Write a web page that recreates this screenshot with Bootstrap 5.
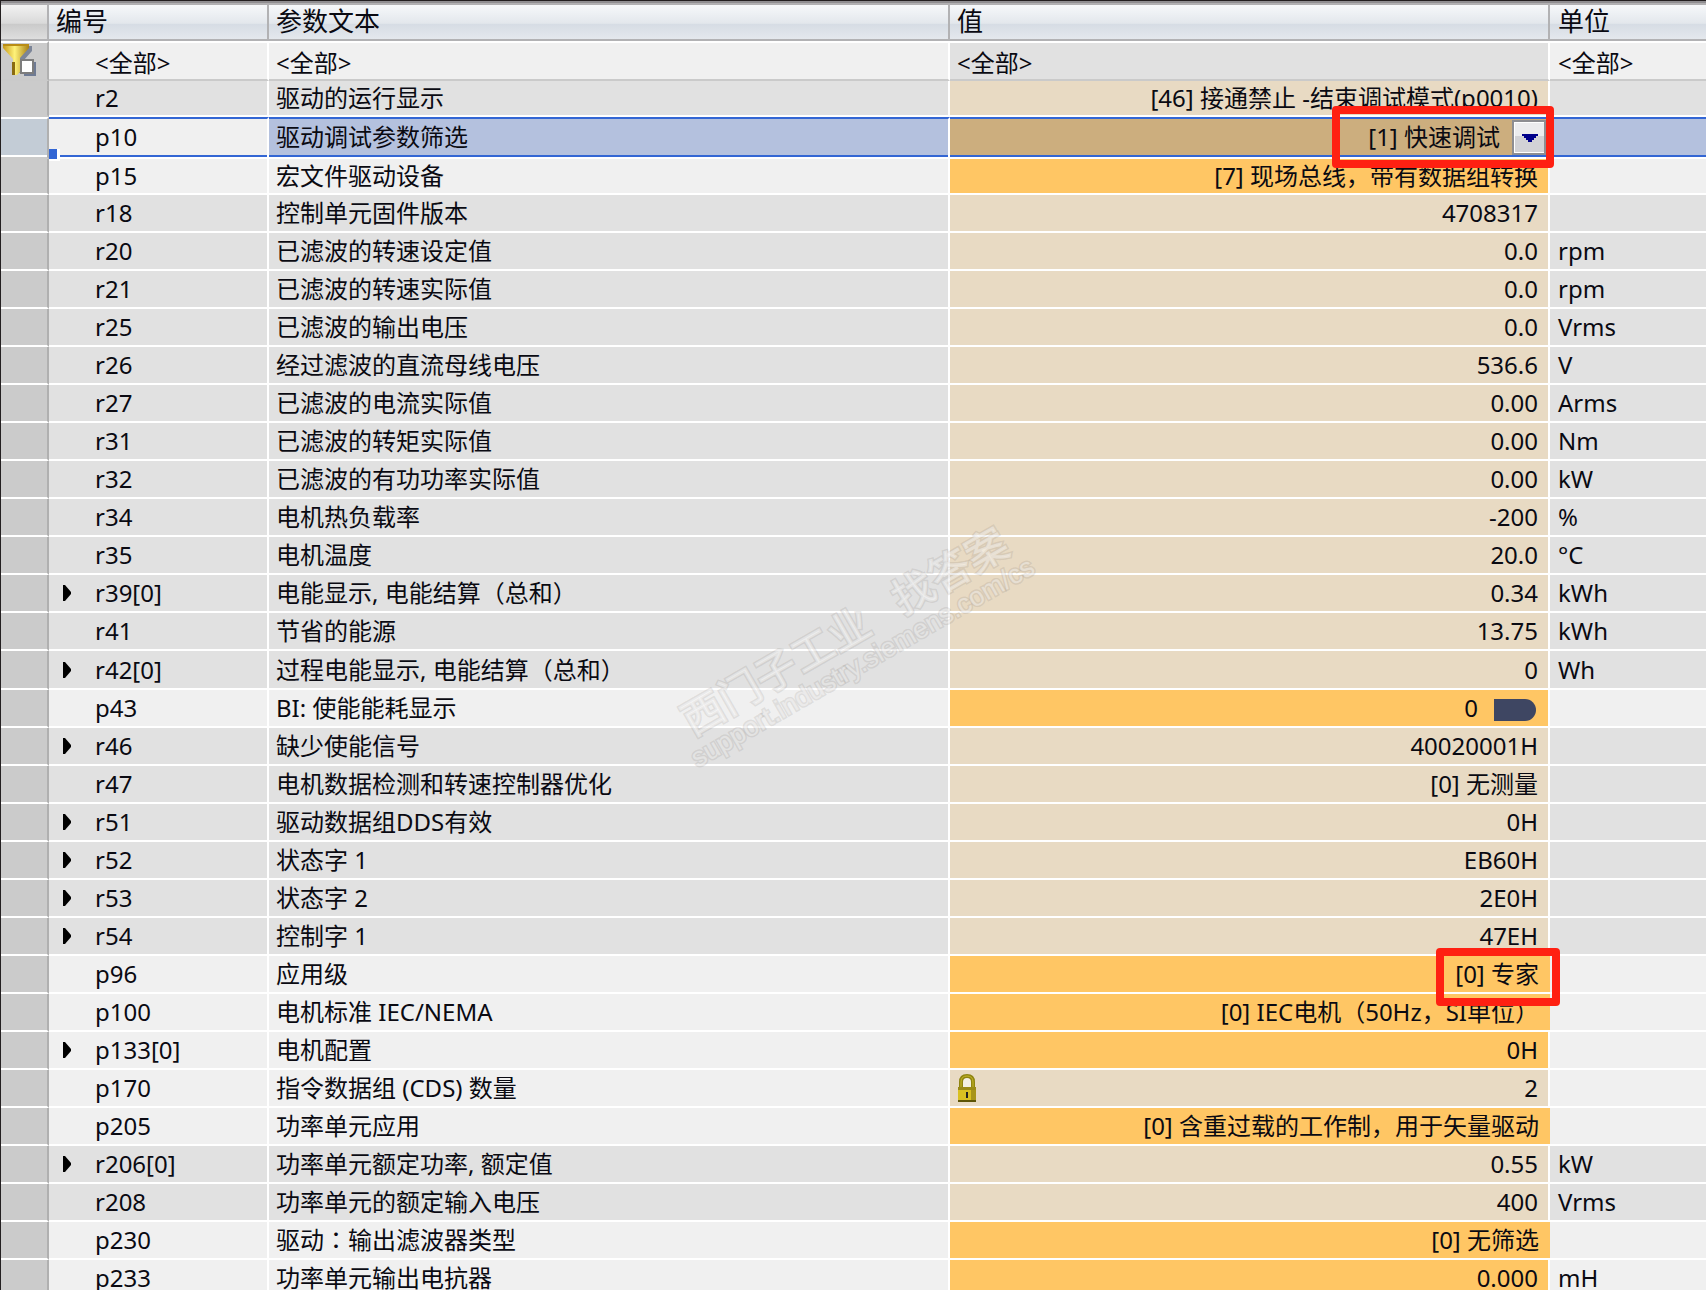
<!DOCTYPE html>
<html lang="zh-CN">
<head>
<meta charset="utf-8">
<meta name="viewport" content="width=device-width, initial-scale=1">
<title>参数列表</title>
<link href="https://cdn.jsdelivr.net/npm/bootstrap@5.3.0/dist/css/bootstrap.min.css" rel="stylesheet">
<style>
  body { font-family: "Noto Sans", "Noto Sans CJK SC", sans-serif; font-size: 24px; line-height: 34px; color: #0a0a12; background: #fff; overflow: hidden; }
  .frame { border-top: 1px solid #231f20; border-left: 1px solid #231f20; overflow: hidden; height: 100vh; }
  .topline { height: 4px; background: linear-gradient(#8f8d90 50%, #b1b0b2 50%); }
  .grid { width: 100%; table-layout: fixed; border-collapse: separate; border-spacing: 0; white-space: nowrap; }
  .grid th, .grid td { padding: 0 7px; height: 38px; border-right: 2px solid #fff; border-bottom: 2px solid #fff; vertical-align: middle; }
  .grid th:last-child, .grid td:last-child { border-right: 0; padding-left: 8px; }
  .grid .c-gut { width: 48px; } .grid .c-num { width: 220px; } .grid .c-txt { width: 681px; } .grid .c-val { width: 600px; }
  .grid thead th { height: 36px; padding-bottom: 2px; font-size: 26px; font-weight: 400; line-height: 32px; border-color: #b2b2b4; background: linear-gradient(#f6f8fa, #e3e7ec 54%, #d6dce4 56%, #e4e8ed); }
  .grid thead th:first-child { background: linear-gradient(#f2f2f2, #d9d9d9 54%, #cacaca 56%, #dedede); }
  .grid .gut { background: #cbcbcb; border-right-color: #b0b0b0; padding: 0; }
  .grid .num { padding-left: 13px; }
  .ro td { background: #e1e1e1; }
  .rw td { background: #f0f0f0; }
  .ro .val, .rw .val { text-align: right; padding-right: 10px; }
  .ro .val { background: #e8dac3; }
  .rw .val { background: #ffc664; }
  .rw.locked .val { background: #e8dac3; }
  .grid .wide { border-right: 0; padding-right: 11px; }
  .filters td { background: #f0f0f0; border-bottom-color: #cacaca; height: 40px; border-top: 2px solid #fff; }
  .filters .fval { background: #e1e1e1; }
  .filters input { background: none; border: 0; padding: 0; width: 100%; height: 36px; display: block; color: inherit; font: inherit; line-height: 34px; }
  .grid .filters .num { padding-left: 46px; }
  .tight td { height: 36px; }
  .first .gut { border-bottom-color: #cbcbcb; }
  .tall td { height: 39px; }
  .tree { width: 14px; height: 34px; margin-right: 19px; border: 0; padding: 0; background: none; display: inline-flex; align-items: center; flex: none; }
  .grid .sel td { background: #b4c1de; height: 42px; padding-bottom: 2px; border-top: 2px solid #3366d4; border-bottom: 2px solid #fff; box-shadow: inset 0 -2px #3366d4; }
  .grid .sel .num { background: #f0f0f0; position: relative; }
  .grid .sel .gut { background: #c3ccd6; border-top-color: #fff; border-bottom-color: #cbcbcb; box-shadow: inset 0 -2px #fff; }
  .grid .sel .val { background: #ccae7e; position: relative; padding-right: 0; }
  .handle { position: absolute; left: 0; bottom: -4px; width: 11px; height: 12px; background: #3366d4; border-right: 3px solid #fff; border-bottom: 2px solid #fff; }
  .sel select { appearance: none; background: none; border: 0; padding: 0 48px 0 0; width: 100%; height: 34px; font: inherit; color: inherit; line-height: 34px; text-align-last: right; display: block; }
  .drop { position: absolute; right: 0; top: 1px; pointer-events: none; }
  .callout { position: absolute; border: 8px solid #ff2012; border-radius: 4px; z-index: 3; pointer-events: none; }
  .call-a { width: 222px; height: 62px; right: -6px; top: -13px; }
  .call-b { width: 124px; height: 58px; right: -21px; top: -9px; }
  .link-pill { width: 42px; height: 22px; border: 0; padding: 0; margin-top: 3px; margin-right: 2px; border-radius: 0 11px 11px 0; background: #3e4662; }
  .tc { font-family: "Noto Sans CJK TC", sans-serif; line-height: 1; }
  .stamp { position: absolute; left: 851px; top: 643px; transform: translate(-50%, -50%) rotate(-30deg); white-space: nowrap; text-align: center; color: rgba(255,255,255,.42); -webkit-text-stroke: 3px rgba(125,120,115,.16); paint-order: stroke fill; pointer-events: none; }
  .stamp-a { font-size: 42px; line-height: 42px; font-weight: 500; }
  .stamp-b { font-family: "Liberation Sans", sans-serif; font-size: 27px; line-height: 30px; }
</style>
<script src="https://cdn.jsdelivr.net/npm/bootstrap@5.3.0/dist/js/bootstrap.bundle.min.js"></script>
</head>
<body>
<main class="frame position-relative">
<div class="topline"></div>
<table class="grid">
  <colgroup><col class="c-gut"><col class="c-num"><col class="c-txt"><col class="c-val"><col></colgroup>
  <thead><tr><th aria-label="状态"></th><th scope="col">编号</th><th scope="col">参数文本</th><th scope="col">值</th><th scope="col">单位</th></tr></thead>
  <tbody id="rows">
    <tr class="filters">
      <td class="gut"><svg class="d-block" width="36" height="36" viewBox="0 0 36 36" aria-hidden="true"><defs><linearGradient id="gold"><stop offset="0" stop-color="#c79a1c"/><stop offset=".45" stop-color="#fff27a"/><stop offset="1" stop-color="#a87f12"/></linearGradient></defs><path d="M6 3h25v5l-8 9v13h-7V18L6 7z" fill="#7c8598"/><path d="M2 1h26v4l-9 10v14l-3 3h-4V16L2 5z" fill="url(#gold)"/><path d="M2 1h26v2H2z" fill="#b98c14"/><path d="M11 19h3v13h-3z" fill="#8a6a10"/><path d="M23 19h12v14H23z" fill="#6f7b94"/><path d="M20 17h12v13H20z" fill="#fff" stroke="#7d7d7d" stroke-width="2"/></svg></td>
      <td class="num"><input type="text" value="&lt;全部&gt;" aria-label="筛选编号"></td>
      <td><input type="text" value="&lt;全部&gt;" aria-label="筛选参数文本"></td>
      <td class="fval"><input type="text" value="&lt;全部&gt;" aria-label="筛选值"></td>
      <td><input type="text" value="&lt;全部&gt;" aria-label="筛选单位"></td>
    </tr>
  </tbody>
</table>
<div class="stamp" aria-hidden="true"><div class="stamp-a">西门子工业&nbsp;&nbsp;&nbsp;找答案</div><div class="stamp-b">support.industry.siemens.com/cs</div></div>
</main>
<script>
  // number, text, value, unit, flags: t = has children, k = locked, w = wide value cell
  const params = [
    ["r2", "驱动的运行显示", "[46] 接通禁止 -结束调试模式(p0010)", "", ""],
    ["p10", "驱动调试参数筛选", "[1] 快速调试", "", ""],
    ["p15", "宏文件驱动设备", "[7] 现场总线，带有数据组转换", "", ""],
    ["r18", "控制单元固件版本", "4708317", "", ""],
    ["r20", "已滤波的转速设定值", "0.0", "rpm", ""],
    ["r21", "已滤波的转速实际值", "0.0", "rpm", ""],
    ["r25", "已滤波的输出电压", "0.0", "Vrms", ""],
    ["r26", "经过滤波的直流母线电压", "536.6", "V", ""],
    ["r27", "已滤波的电流实际值", "0.00", "Arms", ""],
    ["r31", "已滤波的转矩实际值", "0.00", "Nm", ""],
    ["r32", "已滤波的有功功率实际值", "0.00", "kW", ""],
    ["r34", "电机热负载率", "-200", "%", ""],
    ["r35", "电机温度", "20.0", "°C", ""],
    ["r39[0]", "电能显示, 电能结算（总和）", "0.34", "kWh", "t"],
    ["r41", "节省的能源", "13.75", "kWh", ""],
    ["r42[0]", "过程电能显示, 电能结算（总和）", "0", "Wh", "t"],
    ["p43", "BI: 使能能耗显示", "0", "", ""],
    ["r46", "缺少使能信号", "40020001H", "", "t"],
    ["r47", "电机数据检测和转速控制器优化", "[0] 无测量", "", ""],
    ["r51", "驱动数据组DDS有效", "0H", "", "t"],
    ["r52", "状态字 1", "EB60H", "", "t"],
    ["r53", "状态字 2", "2E0H", "", "t"],
    ["r54", "控制字 1", "47EH", "", "t"],
    ["p96", "应用级", "[0] 专家", "", "w"],
    ["p100", "电机标准 IEC/NEMA", "[0] IEC电机（50Hz，SI单位）", "", "w"],
    ["p133[0]", "电机配置", "0H", "", "t"],
    ["p170", "指令数据组 (CDS) 数量", "2", "", "k"],
    ["p205", "功率单元应用", "[0] 含重过载的工作制，用于矢量驱动", "", "w"],
    ["r206[0]", "功率单元额定功率, 额定值", "0.55", "kW", "t"],
    ["r208", "功率单元的额定输入电压", "400", "Vrms", ""],
    ["p230", "驱动<span class=\"tc\" lang=\"zh-TW\">：</span>输出滤波器类型", "[0] 无筛选", "", "w"],
    ["p233", "功率单元输出电抗器", "0.000", "mH", ""]
  ];
  const rowClass = { r2: "tight first", p10: "sel", p15: "tight", "r42[0]": "tall" };
  const arrow = '<svg width="10" height="18" viewBox="0 0 10 18" aria-hidden="true"><path d="M1 1h2l6 7v2l-6 7H1z" fill="#000"/></svg>';
  const lock = '<svg width="20" height="30" viewBox="0 0 20 30" aria-hidden="true"><path d="M4 15V9q0-6 6-6t6 6v6" fill="#f3efe2" stroke="#8f8410" stroke-width="4"/><path d="M4 14V9q0-6 6-6t6 6v5" fill="none" stroke="#c9b92a" stroke-width="1"/><path d="M1 14h18v14H1z" fill="#d9c022"/><path d="M14 14h5v14h-5z" fill="#a8951a"/><path d="M1 14h18v3H1z" fill="#9a8a16"/><path d="M1 27h18v2H1z" fill="#5d5406"/><path d="M9 19h2v6H9z" fill="#222"/></svg>';
  const drop = '<svg class="drop" width="36" height="35" viewBox="0 0 36 35" aria-hidden="true"><path d="M0 0h36v35H0z" fill="#8e8e92"/><path d="M2 2h30v31H2z" fill="#fff"/><path d="M3 3h29v13H3z" fill="#ececee"/><path d="M3 16h29v16H3z" fill="#d2d2d6"/><path d="M10 14h16v2h-2v2h-2v2h-2v2h-4v-2h-2v-2h-2v-2h-2z" fill="#00008b"/></svg>';
  document.getElementById("rows").insertAdjacentHTML("beforeend", params.map(([id, text, value, unit, f]) => {
    const kind = id[0] === "p" ? "rw" : "ro";
    const tree = f.includes("t") ? `<button class="tree" type="button" aria-label="展开 ${id}">${arrow}</button>` : '<span class="tree"></span>';
    let cell = value;
    if (id === "p10") cell = `<select aria-label="${text}"><option>${value}</option></select>${drop}<span class="callout call-a"></span>`;
    if (id === "p43") cell = `<div class="d-flex justify-content-end align-items-center">${value}<button class="link-pill ms-3" type="button" aria-label="互联"></button></div>`;
    if (id === "p96") cell = `<div class="position-relative">${value}<span class="callout call-b"></span></div>`;
    if (f.includes("k")) cell = `<div class="d-flex justify-content-between align-items-center">${lock}${value}</div>`;
    return `<tr class="${kind} ${rowClass[id] || ""} ${f.includes("k") ? "locked" : ""}"><td class="gut"></td><td class="num"><div class="d-flex align-items-center">${tree}${id}</div>${id === "p10" ? '<span class="handle"></span>' : ""}</td><td>${text}</td><td class="val ${f.includes("w") ? "wide" : ""}">${cell}</td><td>${unit}</td></tr>`;
  }).join(""));
</script>
</body>
</html>
